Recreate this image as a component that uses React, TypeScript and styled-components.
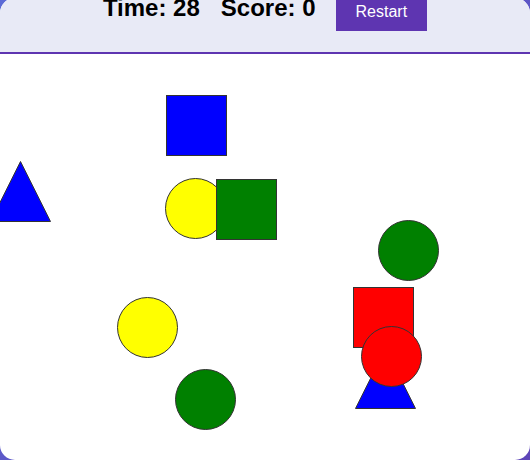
import React from "react";
import styled, { createGlobalStyle } from "styled-components";

type ShapeKind = "square" | "circle" | "triangle";

interface Shape {
  kind: ShapeKind;
  color: string;
  x: number;
  y: number;
}

const shapes: Shape[] = [
  { kind: "square", color: "blue", x: 166, y: 41 },
  { kind: "circle", color: "yellow", x: 165, y: 124 },
  { kind: "square", color: "green", x: 216, y: 125 },
  { kind: "triangle", color: "blue", x: -10, y: 107 },
  { kind: "circle", color: "green", x: 378, y: 166 },
  { kind: "square", color: "red", x: 353, y: 233 },
  { kind: "triangle", color: "blue", x: 355, y: 294 },
  { kind: "circle", color: "red", x: 361, y: 272 },
  { kind: "circle", color: "yellow", x: 117, y: 243 },
  { kind: "circle", color: "green", x: 175, y: 315 },
];

const GlobalStyle = createGlobalStyle`
  html, body {
    margin: 0;
    height: 100%;
    overflow: hidden;
  }
  body {
    background: linear-gradient(135deg, #5c6bd6 0%, #5e45b8 100%);
    font-family: "Liberation Sans", Arial, sans-serif;
  }
`;

const GameCard = styled.div`
  margin-top: -2px;
  height: 462px;
  background: #fff;
  border-radius: 15px;
  overflow: hidden;
  display: flex;
  flex-direction: column;
`;

const Header = styled.header`
  height: 54px;
  background: #e8eaf6;
  border-bottom: 2px solid #5e35b1;
  display: flex;
  justify-content: center;
  align-items: flex-start;
  gap: 21px;
`;

const Stat = styled.span`
  font-size: 24px;
  font-weight: 700;
  line-height: 24px;
  color: #000;
  margin-top: -2px;
`;

const RestartButton = styled.button`
  margin-top: -5px;
  margin-left: -1px;
  padding: 10px 20px;
  border: none;
  background: #5e35b1;
  color: #fff;
  font-family: "Liberation Sans", Arial, sans-serif;
  font-size: 16px;
  cursor: pointer;
`;

const Arena = styled.div`
  position: relative;
  flex: 1;
`;

const Block = styled.div<{ $color: string; $round: boolean }>`
  position: absolute;
  box-sizing: border-box;
  width: 61px;
  height: 61px;
  background: ${(p) => p.$color};
  border: 1px solid #333;
  border-radius: ${(p) => (p.$round ? "50%" : "0")};
`;

const TriangleSvg = styled.svg`
  position: absolute;
  width: 61px;
  height: 61px;
  overflow: visible;
`;

function ShapeItem({ shape }: { shape: Shape }) {
  const pos = { left: shape.x, top: shape.y };
  if (shape.kind === "triangle") {
    return (
      <TriangleSvg style={pos} viewBox="0 0 61 61">
        <polygon
          points="30.5,0.5 60.5,60.5 0.5,60.5"
          fill={shape.color}
          stroke="#333"
          strokeWidth="1"
        />
      </TriangleSvg>
    );
  }
  return <Block style={pos} $color={shape.color} $round={shape.kind === "circle"} />;
}

export default function App() {
  return (
    <>
      <GlobalStyle />
      <GameCard>
        <Header>
          <Stat>Time: 28</Stat>
          <Stat>Score: 0</Stat>
          <RestartButton>Restart</RestartButton>
        </Header>
        <Arena>
          {shapes.map((s, i) => (
            <ShapeItem key={i} shape={s} />
          ))}
        </Arena>
      </GameCard>
    </>
  );
}
